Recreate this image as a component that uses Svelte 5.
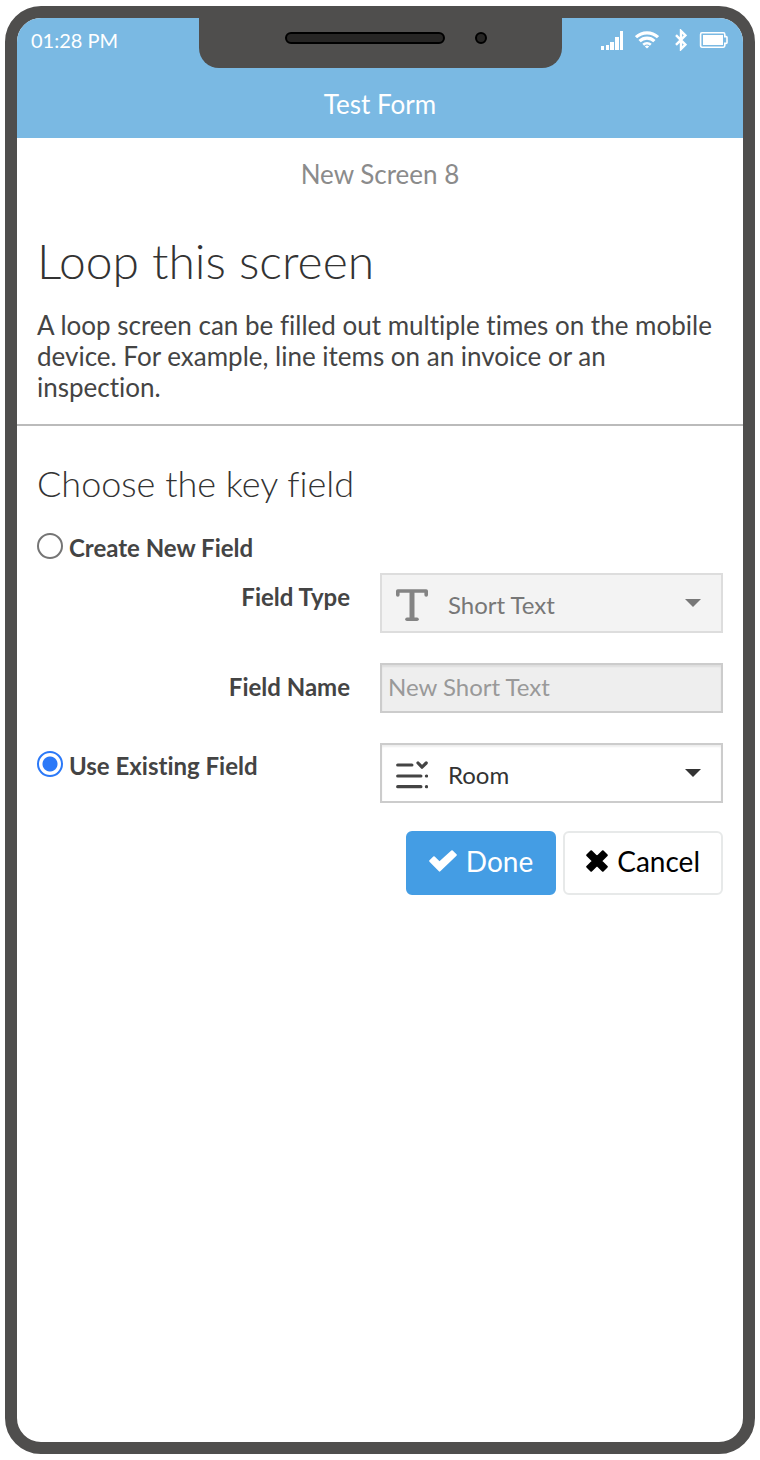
<script>
  let mode = 'existing';
  let fieldType = 'Short Text';
  let fieldName = '';
  let existingField = 'Room';

  const fieldTypes = ['Short Text'];
  const existingFields = ['Room'];
</script>

<div class="phone">
  <header class="top-bar">
      <div class="status-bar">
          <span class="clock">01:28 PM</span>
          <div class="status-icons">
              <svg width="24" height="20" viewBox="0 0 24 20" fill="#fff" aria-hidden="true">
                  <rect x="0" y="16" width="3" height="4" />
                  <rect x="5" y="15" width="3" height="5" />
                  <rect x="9" y="12" width="4" height="8" />
                  <rect x="14" y="7" width="4" height="13" />
                  <rect x="19" y="1" width="3" height="19" />
              </svg>
              <svg width="24" height="18" viewBox="0 0 24 18" fill="none" stroke="#fff" stroke-width="3.2" aria-hidden="true">
                  <path d="M1 6.2C7.2.3 16.8.3 23 6.2" />
                  <path d="M4.6 10.2c4.2-4 10.6-4 14.8 0" />
                  <path d="M8.2 13.8c2.2-2 5.4-2 7.6 0" stroke-width="2.6" />
                  <path d="M12 17.6l-2.2-2.2q2.2-1.8 4.4 0z" fill="#fff" stroke="none" />
              </svg>
              <svg class="bluetooth" width="12" height="22" viewBox="0 0 12 22" fill="none" stroke="#fff" stroke-width="2.4" aria-hidden="true">
                  <path d="M1 6.2l9.4 9.4L6 20V2l4.4 4.4L1 15.8" />
              </svg>
              <svg width="30" height="18" viewBox="0 0 30 18" fill="none" aria-hidden="true">
                  <path d="M3 1.8h21.4q1.4 0 1.4 1.6v2.2h1.4q.8 0 .8.8v5.2q0 .8-.8.8h-1.4v2.2q0 1.6-1.4 1.6H3q-1.4 0-1.4-1.6V3.4q0-1.6 1.4-1.6z" stroke="#fff" stroke-width="1.6" />
                  <rect x="4" y="4" width="20" height="10" fill="#fff" />
              </svg>
          </div>
      </div>
      <div class="notch">
          <span class="speaker"></span>
          <span class="camera"></span>
      </div>
      <h1>Test Form</h1>
  </header>

  <main>
      <p class="screen-name">New Screen 8</p>

      <section class="intro">
          <h2>Loop this screen</h2>
          <p>A loop screen can be filled out multiple times on the mobile device. For example, line items on an invoice or an inspection.</p>
      </section>

      <form class="key-field" on:submit|preventDefault>
          <h3>Choose the key field</h3>

          <label class="choice">
              <input type="radio" name="mode" value="new" bind:group={mode} />
              Create New Field
          </label>

          <div class="form-row">
              <label class="field-label" for="field-type">Field Type</label>
              <div class="select-box">
                  <svg class="type-icon" width="32" height="32" viewBox="0 0 32 32" fill="none" stroke="#848484" aria-hidden="true">
                      <path d="M1.8 6V2h28.4v4" stroke-width="3.6" stroke-linecap="round" stroke-linejoin="round" />
                      <path d="M16 2v28" stroke-width="5" />
                      <path d="M11 30.2h10" stroke-width="3.6" stroke-linecap="round" />
                  </svg>
                  <select id="field-type" bind:value={fieldType} disabled={mode !== 'new'}>
                      {#each fieldTypes as type}
                          <option value={type}>{type}</option>
                      {/each}
                  </select>
                  <svg class="caret" width="16" height="8" viewBox="0 0 16 8" fill="#777" aria-hidden="true">
                      <path d="M0 0h16L8 8z" />
                  </svg>
              </div>
          </div>

          <div class="form-row">
              <label class="field-label" for="field-name">Field Name</label>
              <input
                  type="text"
                  id="field-name"
                  bind:value={fieldName}
                  placeholder="New Short Text"
                  disabled={mode !== 'new'}
              />
          </div>

          <div class="form-row">
              <label class="choice">
                  <input type="radio" name="mode" value="existing" bind:group={mode} />
                  Use Existing Field
              </label>
              <div class="select-box">
                  <svg class="type-icon" width="32" height="32" viewBox="0 0 32 32" fill="none" stroke="#444" stroke-width="3.2" stroke-linecap="round" aria-hidden="true">
                      <path d="M1.7 6h14.2M1.7 17h23.2M1.7 27.7h23.2M30.4 17h.1M30.4 27.7h.1" />
                      <path d="M22 4l4 4.2L30.2 4" stroke-linejoin="round" />
                  </svg>
                  <select aria-label="Existing field" bind:value={existingField} disabled={mode !== 'existing'}>
                      {#each existingFields as field}
                          <option value={field}>{field}</option>
                      {/each}
                  </select>
                  <svg class="caret" width="16" height="8" viewBox="0 0 16 8" fill="#333" aria-hidden="true">
                      <path d="M0 0h16L8 8z" />
                  </svg>
              </div>
          </div>

          <div class="actions">
              <button type="submit" class="done">
                  <svg width="28" height="22" viewBox="0 0 28 22" fill="#fff" stroke="#fff" stroke-width="2" stroke-linejoin="round" aria-hidden="true">
                      <path d="M1.2 11l3.8-3.8 5.6 5.4L23 1.2l3.8 3.8-16.2 15.6z" />
                  </svg>
                  Done
              </button>
              <button type="button" class="cancel">
                  <svg width="22" height="22" viewBox="0 0 22 22" stroke="#000" stroke-width="2" stroke-linejoin="round" aria-hidden="true">
                      <path d="M5.2 1.2L11 7l5.8-5.8 4 4L15 11l5.8 5.8-4 4L11 15l-5.8 5.8-4-4L7 11 1.2 5.2z" />
                  </svg>
                  Cancel
              </button>
          </div>
      </form>
  </main>
</div>

<style>
  :global(body) {
      margin: 0;
      background: #fff;
  }

  .phone,
  .phone * {
      box-sizing: border-box;
  }

  .phone {
      display: flex;
      flex-direction: column;
      min-height: calc(100vh - 12px);
      margin: 6px 5px;
      border: 12px solid #4f4e4d;
      border-radius: 36px;
      overflow: hidden;
      background: #fff;
      color: #444;
      font-family: Lato, "Liberation Sans", sans-serif;
      font-size: 24px;
      font-variant-ligatures: none;
      line-height: 30px;
  }

  h1,
  h2,
  h3,
  p {
      margin: 0;
  }

  .top-bar {
      position: relative;
      background: #7ab9e3;
      color: #fff;
  }

  .status-bar {
      display: flex;
      align-items: center;
      justify-content: space-between;
      height: 44px;
      padding: 0 14px;
  }

  .clock {
      font-size: 20px;
  }

  .status-icons {
      display: flex;
      align-items: center;
      gap: 10px;
  }

  .bluetooth {
      margin: 0 2px 0 6px;
  }

  .notch {
      position: absolute;
      top: 0;
      left: 25%;
      width: 50%;
      height: 50px;
      border-radius: 0 0 20px 20px;
      background: #4f4e4d;
  }

  .speaker,
  .camera {
      position: absolute;
      top: 14px;
      height: 12px;
      border: 2px solid #000;
      border-radius: 6px;
      background: #272625;
  }

  .speaker {
      left: calc(50% - 95px);
      width: 160px;
  }

  .camera {
      left: calc(50% + 95px);
      width: 12px;
  }

  h1 {
      padding: 27px 0 19px;
      font-size: 26px;
      font-weight: 400;
      text-align: center;
  }

  .screen-name {
      padding: 21px 20px 23px;
      color: #8b8b8b;
      font-size: 26px;
      text-align: center;
  }

  .intro {
      padding: 19px 20px 21px;
      border-bottom: 2px solid #bbb;
      font-size: 26px;
      line-height: 31px;
  }

  h2 {
      margin-bottom: 19px;
      color: #333;
      font-size: 48px;
      font-weight: 300;
      line-height: 60px;
  }

  .key-field {
      padding: 36px 20px;
  }

  h3 {
      margin-bottom: 28px;
      color: #333;
      font-size: 36px;
      font-weight: 300;
      line-height: 42px;
  }

  .choice {
      display: flex;
      align-items: center;
      gap: 6px;
      font-size: 24px;
      font-weight: 700;
  }

  .choice input {
      appearance: none;
      flex: none;
      width: 26px;
      height: 26px;
      margin: 0 0 4px;
      border: 2px solid #757575;
      border-radius: 50%;
      background: #fff;
  }

  .choice input:checked {
      border-color: #2b79f8;
      background: radial-gradient(circle, #2b79f8 7px, #fff 8px);
  }

  .form-row {
      display: grid;
      grid-template-columns: 1fr 1fr;
      align-items: start;
      margin-bottom: 30px;
  }

  .form-row .choice {
      padding-top: 8px;
  }

  .key-field > .choice {
      margin-bottom: 10px;
      padding-top: 1px;
  }

  .field-label {
      padding: 9px 30px 0 0;
      font-size: 24px;
      font-weight: 700;
      text-align: right;
  }

  .select-box {
      position: relative;
  }

  .type-icon {
      position: absolute;
      top: 16px;
      left: 16px;
      pointer-events: none;
  }

  .caret {
      position: absolute;
      top: 26px;
      right: 22px;
      pointer-events: none;
  }

  select,
  input[type='text'] {
      display: block;
      width: 100%;
      border: 2px solid #ccc;
      border-radius: 0;
      box-shadow: inset 0 2px 2px rgba(0, 0, 0, 0.07);
      background: #fff;
      color: #333;
      font-family: inherit;
      font-size: 24px;
  }

  select {
      appearance: none;
      height: 60px;
      padding: 2px 60px 0 66px;
  }

  select:disabled {
      border-color: #ddd;
      box-shadow: none;
      background: #f3f3f3;
      color: #777;
      opacity: 1;
  }

  input[type='text'] {
      height: 50px;
      padding: 0 6px 4px;
  }

  input[type='text']:disabled {
      background: #eee;
  }

  input[type='text']::placeholder {
      color: #999;
  }

  .actions {
      display: flex;
      justify-content: flex-end;
      gap: 7px;
      margin-top: -2px;
  }

  button {
      display: flex;
      align-items: center;
      gap: 9px;
      height: 64px;
      padding: 0 21px 4px;
      border: 2px solid #e7e9e9;
      border-radius: 6px;
      background: #fff;
      color: #000;
      font-family: inherit;
      font-size: 28px;
      cursor: pointer;
  }

  .done {
      border-color: #449de4;
      background: #449de4;
      color: #fff;
  }
</style>
